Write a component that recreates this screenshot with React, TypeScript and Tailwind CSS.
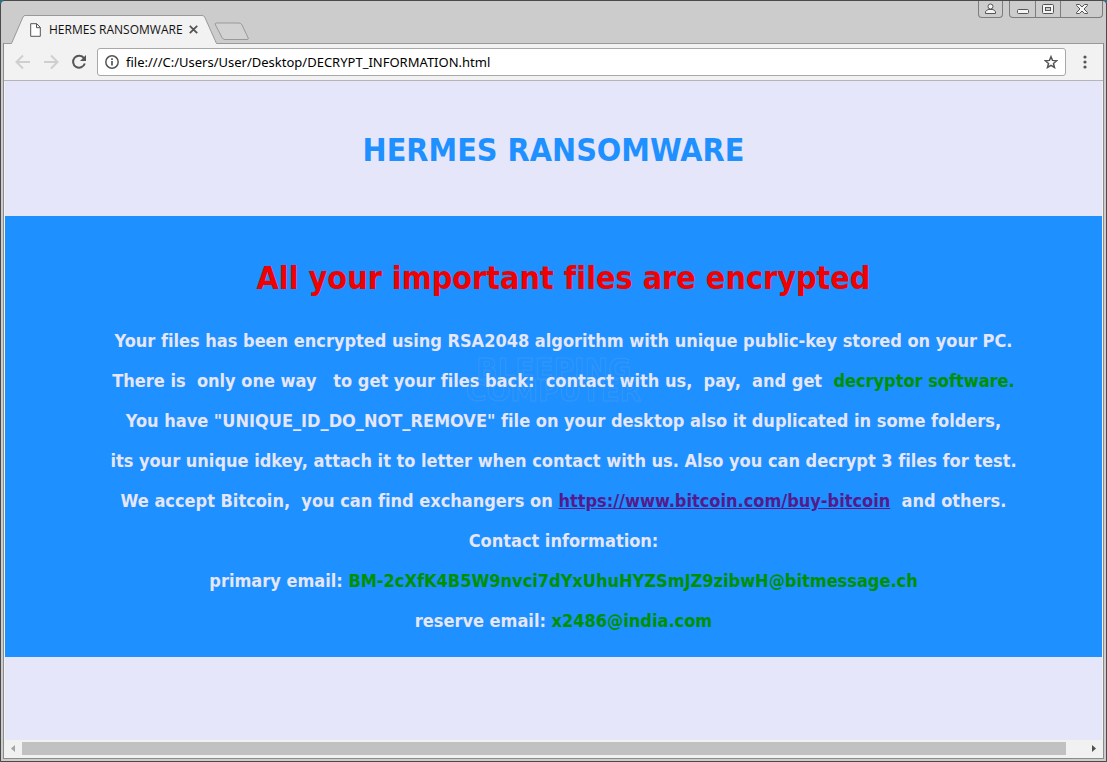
import React from 'react';

const TITLE = 'HERMES RANSOMWARE';
const PAGE_URL = 'file:///C:/Users/User/Desktop/DECRYPT_INFORMATION.html';

function WindowButtons() {
  return (
    <div className="absolute right-px top-0 flex h-[17px]">
      <button aria-label="Profile" className="mr-[6px] flex w-[25px] items-center justify-center rounded-b border border-t-0 border-[#7d7d7d]">
        <svg width="11" height="12" viewBox="0 0 11 12" fill="#f4f4f4" stroke="#555">
          <path d="M0.500 10.500h10V8.500L8 6.500H3L0.500 8.500z" />
          <circle cx="5.500" cy="3.500" r="2.500" />
        </svg>
      </button>
      <div className="flex rounded-b border border-t-0 border-[#7d7d7d]">
        <button aria-label="Minimize" className="flex w-[25px] items-end justify-center pb-[3px]">
          <svg width="12" height="5" viewBox="0 0 12 5" fill="#f4f4f4" stroke="#555">
            <rect x="0.500" y="0.500" width="11" height="4" rx="1" />
          </svg>
        </button>
        <button aria-label="Maximize" className="flex w-[25px] items-center justify-center border-l border-[#7d7d7d]">
          <svg width="12" height="10" viewBox="0 0 12 10" fill="#f4f4f4" stroke="#555">
            <rect x="0.500" y="0.500" width="11" height="9" rx="1" />
            <rect x="3.500" y="3.500" width="5" height="3" fill="#ccc" />
          </svg>
        </button>
        <button aria-label="Close" className="flex w-[42px] items-center justify-center border-l border-[#7d7d7d]">
          <svg width="12" height="10" viewBox="0 0 12 10" fill="#f4f4f4" stroke="#555">
            <path d="M0.500 0.500h3L6 3l2.500-2.500h3v1L8 5l3.500 3.500v1h-3L6 7 3.500 9.500h-3v-1L4 5 0.500 1.500z" />
          </svg>
        </button>
      </div>
    </div>
  );
}

function TabStrip() {
  return (
    <div className="relative flex h-[42px] items-end pl-[8px]">
      {/* the active tab hangs over the toolbar's top border */}
      <div className="relative z-10 -mb-px h-[29px] w-[206px]">
        <svg className="absolute inset-0" width="206" height="29" viewBox="0 0 206 29">
          <path d="M0.500 28.500L12 2Q12.700 0.500 14 0.500H191Q193 0.500 193.700 2L205.500 28.500V29H0.500z" fill="#f2f2f2" />
          <path d="M0.500 28.500L12 2Q12.700 0.500 14 0.500H191Q193 0.500 193.700 2L205.500 28.500" fill="none" stroke="#999" />
        </svg>
        <div className="relative flex h-full items-center pl-[19px]">
          <svg width="11" height="14" viewBox="0 0 11 14" fill="#fff" stroke="#555">
            <path d="M0.700 0.700h6l3.600 3.600v9H0.700zM6.500 0.700v4h3.800" />
          </svg>
          <span className="ml-[8px] w-[134px] whitespace-nowrap font-['Open_Sans','Noto_Sans',sans-serif] text-[12px] leading-[16px] text-[#111]">
            {TITLE}
          </span>
          <button aria-label="Close tab" className="ml-[6px]">
            <svg width="9" height="9" viewBox="0 0 9 9" stroke="#555" strokeWidth="1.800">
              <path d="M0.800 0.800l7.400 7.400M8.200 0.800L0.800 8.200" />
            </svg>
          </button>
        </div>
      </div>
      <button aria-label="New tab" className="mb-[2px] ml-[-3px]">
        <svg width="36" height="19" viewBox="0 0 36 19" fill="#d2d2d2" stroke="#999">
          <path d="M2.500 1H25Q27 1 28 3L34 15.500Q35 17.500 33 17.500H11Q9 17.500 8 15.500L1.500 3Q0.500 1 2.500 1z" />
        </svg>
      </button>
      <WindowButtons />
    </div>
  );
}

function Toolbar() {
  return (
    <div className="flex h-[38px] items-center border-y border-t-[#999] border-b-[#b6b4b6] bg-[#f2f2f2] pl-[11px] pr-[16px]">
      <button aria-label="Back">
        <svg width="16" height="16" viewBox="0 0 16 16" fill="none" stroke="#cfcfcf" strokeWidth="2">
          <path d="M15 8H2M8 1.500L1.500 8 8 14.500" />
        </svg>
      </button>
      <button aria-label="Forward" className="ml-[12px]">
        <svg width="16" height="16" viewBox="0 0 16 16" fill="none" stroke="#cfcfcf" strokeWidth="2">
          <path d="M1 8h13M8 1.500L14.500 8 8 14.500" />
        </svg>
      </button>
      <button aria-label="Reload" className="ml-[12px]">
        <svg width="16" height="16" viewBox="0 0 16 16" fill="none" stroke="#555" strokeWidth="2">
          <path d="M13 4.200A6 6 0 1 0 13.800 9.500" />
          <path d="M15 1v6H9z" fill="#555" stroke="none" />
        </svg>
      </button>
      <div className="ml-[10px] flex h-[28px] flex-1 items-center rounded-[3px] border border-[#a8a8a8] bg-white pl-[7px] pr-[7px]">
        <svg width="14" height="14" viewBox="0 0 14 14" fill="none" stroke="#555" strokeWidth="1.500">
          <circle cx="7" cy="7" r="6.200" />
          <path d="M7 6v4.500M7 3.300v1.700" strokeWidth="1.700" />
        </svg>
        <input
          aria-label="Address"
          readOnly
          value={PAGE_URL}
          className="ml-[7px] h-[20px] min-w-0 flex-1 bg-transparent font-['Noto_Sans','Open_Sans',sans-serif] text-[13px] text-black outline-none"
        />
        <button aria-label="Bookmark this page">
          <svg width="14" height="14" viewBox="0 0 14 14" fill="none" stroke="#555" strokeWidth="1.500">
            <path d="M7 1.700l1.500 3.700 4.200.3-3.200 2.700 1 4.100L7 10.300l-3.500 2.200 1-4.100L1.300 5.700l4.200-.3z" />
          </svg>
        </button>
      </div>
      <button aria-label="Menu" className="ml-[17px]">
        <svg width="4" height="14" viewBox="0 0 4 14" fill="#555">
          <circle cx="2" cy="2" r="1.600" />
          <circle cx="2" cy="7" r="1.600" />
          <circle cx="2" cy="12" r="1.600" />
        </svg>
      </button>
    </div>
  );
}

function Watermark() {
  return (
    <div
      aria-hidden="true"
      className="pointer-events-none absolute left-1/2 top-[143px] -translate-x-1/2 text-center font-['DejaVu_Sans',sans-serif] text-[28px] font-bold leading-[22px] text-transparent [-webkit-text-stroke:1px_rgba(110,170,230,0.3)]"
    >
      BLEEPING
      <br />
      COMPUTER
    </div>
  );
}

function RansomNote() {
  return (
    <section className="relative bg-[#1e90ff] pb-[16px] pl-[20px] pt-[40px] text-center text-[#e6e6fa]">
      <Watermark />
      <h2 className="relative text-[32px] font-bold leading-[44px] text-[#f00000]">
        All your important files are encrypted
      </h2>
      <div className="relative mt-[21px] whitespace-pre text-[18px] font-bold leading-[40px]">
        <p>Your files has been encrypted using RSA2048 algorithm with unique public-key stored on your PC.</p>
        <p>
          {'There is  only one way   to get your files back:  contact with us,  pay,  and get  '}
          <span className="text-[#009000]">decryptor software.</span>
        </p>
        <p>You have "UNIQUE_ID_DO_NOT_REMOVE" file on your desktop also it duplicated in some folders,</p>
        <p>its your unique idkey, attach it to letter when contact with us. Also you can decrypt 3 files for test.</p>
        <p>
          {'We accept Bitcoin,  you can find exchangers on '}
          <a href="https://www.bitcoin.com/buy-bitcoin" className="text-[#551a8b] underline">
            https://www.bitcoin.com/buy-bitcoin
          </a>
          {'  and others.'}
        </p>
        <p>Contact information:</p>
        <p>
          primary email: <span className="text-[#009000]">BM-2cXfK4B5W9nvci7dYxUhuHYZSmJZ9zibwH@bitmessage.ch</span>
        </p>
        <p>
          reserve email: <span className="text-[#009000]">x2486@india.com</span>
        </p>
      </div>
    </section>
  );
}

function Scrollbar() {
  return (
    <div className="mb-px flex h-[17px] items-center bg-[#f1f1f1]">
      <button aria-label="Scroll left" className="flex w-[18px] justify-center">
        <svg width="4" height="7" viewBox="0 0 4 7" fill="#a3a3a3">
          <path d="M4 0v7L0 3.500z" />
        </svg>
      </button>
      <div className="h-[13px] flex-1 bg-[#c1c1c1]" />
      <button aria-label="Scroll right" className="ml-[19px] flex w-[18px] justify-center">
        <svg width="4" height="7" viewBox="0 0 4 7" fill="#505050">
          <path d="M0 0v7l4-3.500z" />
        </svg>
      </button>
    </div>
  );
}

export default function App() {
  return (
    <div className="flex min-h-screen flex-col bg-[#0b7ea3]">
      <div className="flex flex-1 flex-col rounded-t-[4px] border border-[#4a4a4a] bg-[#cccccc] px-[2px] pb-[2px]">
        <TabStrip />
        <div className="flex flex-1 flex-col border border-t-0 border-[#8c8c8c] bg-[#f2f2f2]">
          <Toolbar />
          <div className="mx-px flex flex-1 flex-col overflow-hidden bg-[#e6e6fa] font-['DejaVu_Sans_Condensed','Noto_Sans',sans-serif] [font-variant-ligatures:none]">
            <h1 className="pb-[44px] pt-[47px] text-center text-[32px] font-bold leading-[44px] text-[#1e90ff]">
              {TITLE}
            </h1>
            <RansomNote />
          </div>
          <Scrollbar />
        </div>
      </div>
    </div>
  );
}
